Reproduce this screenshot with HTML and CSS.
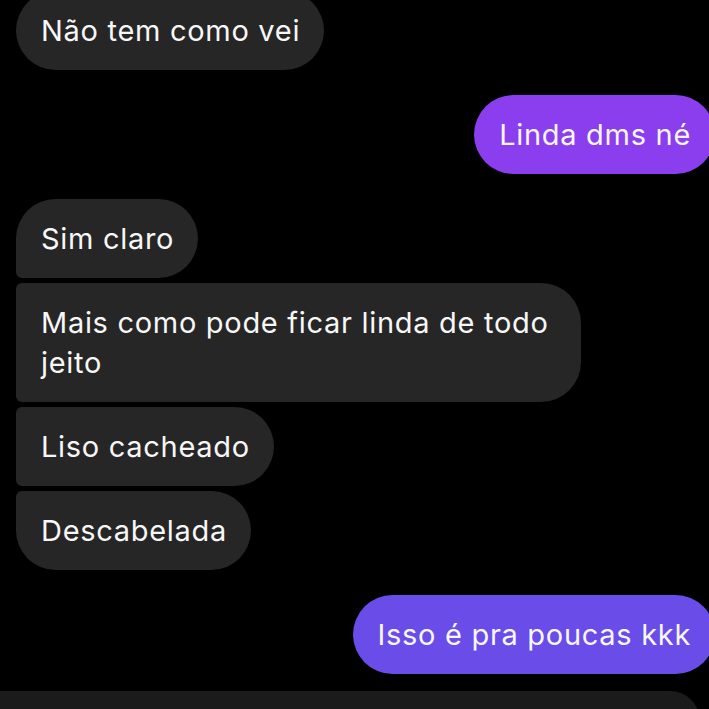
FILE: index.html
```html
<!DOCTYPE html>
<html lang="pt">
<head>
<meta charset="utf-8">
<title>Chat</title>
<link rel="stylesheet" href="styles.css">
</head>
<body>
<div class="thread">
  <div class="group in">
    <div class="bubble last">Não tem como vei</div>
  </div>
  <div class="group out">
    <div class="bubble purple1">Linda dms né</div>
  </div>
  <div class="group in">
    <div class="bubble first">Sim claro</div>
    <div class="bubble mid wide">Mais como pode ficar linda de todo jeito</div>
    <div class="bubble mid">Liso cacheado</div>
    <div class="bubble last">Descabelada</div>
  </div>
  <div class="group out">
    <div class="bubble purple2">Isso é pra poucas kkk</div>
  </div>
  <div class="composer"></div>
</div>
</body>
</html>
```

FILE: styles.css
```css
html, body {
  margin: 0;
  padding: 0;
  background: #000;
  overflow: hidden;
  height: 709px;
}
.thread {
  display: flex;
  flex-direction: column;
  gap: 25px;
  margin-top: -9px;
  font-family: Inter, "Liberation Sans", sans-serif;
  font-size: 29px;
  letter-spacing: 0.7px;
  color: #f7f7f7;
}
.group {
  display: flex;
  flex-direction: column;
  gap: 5px;
}
.group.in {
  align-items: flex-start;
  padding-left: 16px;
}
.group.out {
  align-items: flex-end;
  margin-right: -6px;
}
.bubble {
  box-sizing: border-box;
  padding: 19.5px 24px 19.5px 25px;
  line-height: 40px;
  border-radius: 40px;
  background: #262626;
  max-width: 565px;
}
.in .first { border-bottom-left-radius: 6px; }
.in .mid { border-radius: 6px 40px 40px 6px; }
.in .last { border-top-left-radius: 6px; }
.group.in:first-child .last { border-top-left-radius: 40px; }
.purple1 { background: #8a3eed; }
.purple2 { background: #6a4ce9; }
.composer {
  margin-top: -8px;
  width: 700px;
  height: 60px;
  background: #1b1b1b;
  border-top-right-radius: 30px;
}
```
